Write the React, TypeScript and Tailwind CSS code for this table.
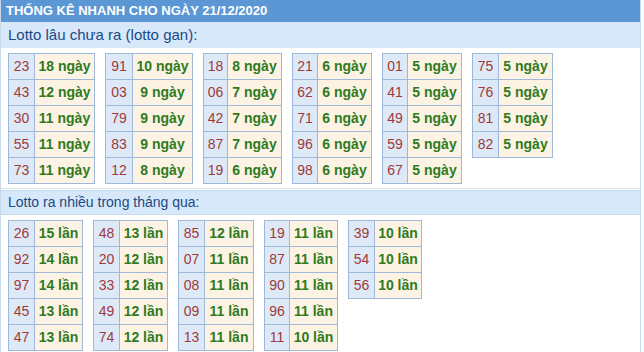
import React from "react";

type Cell = [string, string];

const ganTables: { w1: number; w2: number; rows: Cell[] }[] = [
  { w1: 26, w2: 60, rows: [["23", "18 ngày"], ["43", "12 ngày"], ["30", "11 ngày"], ["55", "11 ngày"], ["73", "11 ngày"]] },
  { w1: 27, w2: 60, rows: [["91", "10 ngày"], ["03", "9 ngày"], ["79", "9 ngày"], ["83", "9 ngày"], ["12", "8 ngày"]] },
  { w1: 24, w2: 54, rows: [["18", "8 ngày"], ["06", "7 ngày"], ["42", "7 ngày"], ["87", "7 ngày"], ["19", "6 ngày"]] },
  { w1: 25, w2: 54, rows: [["21", "6 ngày"], ["62", "6 ngày"], ["71", "6 ngày"], ["96", "6 ngày"], ["98", "6 ngày"]] },
  { w1: 25, w2: 54, rows: [["01", "5 ngày"], ["41", "5 ngày"], ["49", "5 ngày"], ["59", "5 ngày"], ["67", "5 ngày"]] },
  { w1: 26, w2: 54, rows: [["75", "5 ngày"], ["76", "5 ngày"], ["81", "5 ngày"], ["82", "5 ngày"]] },
];

const nhieuTables: { w1: number; w2: number; rows: Cell[] }[] = [
  { w1: 26, w2: 48, rows: [["26", "15 lần"], ["92", "14 lần"], ["97", "14 lần"], ["45", "13 lần"], ["47", "13 lần"]] },
  { w1: 26, w2: 48, rows: [["48", "13 lần"], ["20", "12 lần"], ["33", "12 lần"], ["49", "12 lần"], ["74", "12 lần"]] },
  { w1: 26, w2: 49, rows: [["85", "12 lần"], ["07", "11 lần"], ["08", "11 lần"], ["09", "11 lần"], ["13", "11 lần"]] },
  { w1: 25, w2: 48, rows: [["19", "11 lần"], ["87", "11 lần"], ["90", "11 lần"], ["96", "11 lần"], ["11", "10 lần"]] },
  { w1: 26, w2: 47, rows: [["39", "10 lần"], ["54", "10 lần"], ["56", "10 lần"]] },
];

function LottoTable({ w1, w2, rows }: { w1: number; w2: number; rows: Cell[] }) {
  return (
    <div className="border-l border-t border-[#9db8d9] self-start">
      {rows.map(([num, count]) => (
        <div key={num} className="flex h-[26px]">
          <div
            className="flex items-center justify-center border-r border-b border-[#9db8d9] bg-[#dde9f7] text-[#a0393a] text-[14px]"
            style={{ width: w1 }}
          >
            {num}
          </div>
          <div
            className="flex items-center justify-center border-r border-b border-[#9db8d9] bg-[#fdf3e4] text-[#2f7a1e] text-[14px] font-bold"
            style={{ width: w2 }}
          >
            {count}
          </div>
        </div>
      ))}
    </div>
  );
}

export default function App() {
  return (
    <div className="w-[644px] h-[352px] overflow-hidden bg-white" style={{ fontFamily: '"Liberation Sans", Arial, sans-serif' }}>
      <div className="w-[641px] border-l border-r border-[#c9d8e8]">
        <div className="h-[22px] bg-[#5b97d4] text-white font-bold text-[13px] pl-[5px] flex items-center">
          THỐNG KÊ NHANH CHO NGÀY 21/12/2020
        </div>

        <div className="h-[26px] bg-[#d6e8f9] text-[#1b4a86] text-[15px] pl-[7px] flex items-center">
          Lotto lâu chưa ra (lotto gan):
        </div>
        <div className="flex gap-[10px] pl-[7px] pt-[5px] pb-[4px] border-b border-[#dbe5ef] h-[141px]">
          {ganTables.map((t, i) => (
            <LottoTable key={i} {...t} />
          ))}
        </div>

        <div className="mt-[1px] h-[25px] bg-[#d6e8f9] border-y border-[#c7dbef] text-[#1b4a86] text-[14px] pl-[7px] flex items-center">
          Lotto ra nhiều trong tháng qua:
        </div>
        <div className="flex gap-[10px] pl-[7px] pt-[5px] h-[140px]">
          {nhieuTables.map((t, i) => (
            <LottoTable key={i} {...t} />
          ))}
        </div>
      </div>
    </div>
  );
}
